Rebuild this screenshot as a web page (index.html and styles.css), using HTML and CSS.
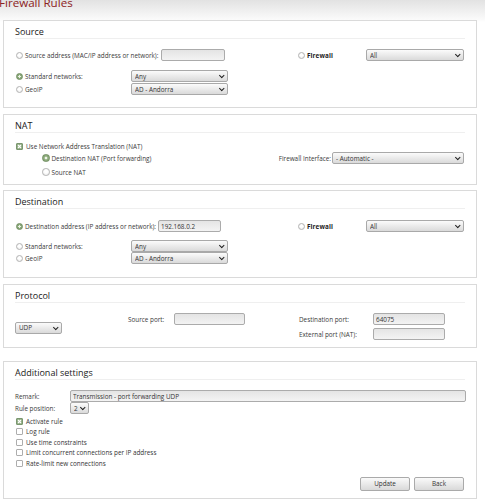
FILE: index.html
```html
<!DOCTYPE html>
<html lang="en">
<head>
<meta charset="utf-8">
<title>Firewall Rules</title>
<link rel="stylesheet" href="styles.css">
</head>
<body>
<div class="page">
  <h1 class="title">Firewall Rules</h1>

  <section class="box src">
    <h2 class="hd">Source</h2>
    <div class="row r1">
      <div class="left">
        <label class="opt"><span class="radio"></span>Source address (MAC/IP address or network):</label>
        <input class="text w-addr" type="text" value="">
      </div>
      <div class="right">
        <label class="opt fw"><span class="radio"></span><b>Firewall</b></label>
        <span class="sel w-all"><select><option>All</option></select></span>
      </div>
    </div>
    <div class="row r2">
      <label class="opt lab"><span class="radio on"></span>Standard networks:</label>
      <span class="sel w-net"><select><option>Any</option></select></span>
    </div>
    <div class="row r3">
      <label class="opt lab"><span class="radio"></span>GeoIP</label>
      <span class="sel w-net"><select><option>AD - Andorra</option></select></span>
    </div>
  </section>

  <section class="box nat">
    <h2 class="hd">NAT</h2>
    <div class="row n1">
      <label class="opt"><span class="check on"><svg viewBox="0 0 7 7" width="7" height="7"><path d="M2 2L5 5M5 2L2 5" stroke="#fff" stroke-width="1.1" fill="none"/></svg></span>Use Network Address Translation (NAT)</label>
    </div>
    <div class="row n2">
      <label class="opt indent"><span class="radio on big"></span>Destination NAT (Port forwarding)</label>
      <div class="iface">
        <span class="iface-lab">Firewall Interface:</span>
        <span class="sel w-if"><select><option>- Automatic -</option></select></span>
      </div>
    </div>
    <div class="row n3">
      <label class="opt indent"><span class="radio big"></span>Source NAT</label>
    </div>
  </section>

  <section class="box dst">
    <h2 class="hd">Destination</h2>
    <div class="row r1">
      <div class="left">
        <label class="opt"><span class="radio on"></span>Destination address (IP address or network):</label>
        <input class="text w-daddr" type="text" value="192.168.0.2">
      </div>
      <div class="right">
        <label class="opt fw"><span class="radio"></span><b>Firewall</b></label>
        <span class="sel w-all"><select><option>All</option></select></span>
      </div>
    </div>
    <div class="row r2">
      <label class="opt lab"><span class="radio"></span>Standard networks:</label>
      <span class="sel w-net"><select><option>Any</option></select></span>
    </div>
    <div class="row r3">
      <label class="opt lab"><span class="radio"></span>GeoIP</label>
      <span class="sel w-net"><select><option>AD - Andorra</option></select></span>
    </div>
  </section>

  <section class="box proto">
    <h2 class="hd">Protocol</h2>
    <div class="pgrid">
      <span class="sel w-udp pcell-udp"><select><option>UDP</option></select></span>
      <span class="plab">Source port:</span>
      <input class="text" type="text" value="">
      <span></span>
      <span class="plab">Destination port:</span>
      <input class="text" type="text" value="64075">
      <span class="plab c5">External port (NAT):</span>
      <input class="text c6" type="text" value="">
    </div>
  </section>

  <section class="box add">
    <h2 class="hd">Additional settings</h2>
    <div class="row a1">
      <span class="alab">Remark:</span>
      <input class="text w-remark" type="text" value="Transmission - port forwarding UDP">
    </div>
    <div class="row a2">
      <span class="alab">Rule position:</span>
      <span class="sel w-pos"><select><option>2</option></select></span>
    </div>
    <ul class="checks">
      <li><span class="check on"><svg viewBox="0 0 7 7" width="7" height="7"><path d="M2 2L5 5M5 2L2 5" stroke="#fff" stroke-width="1.1" fill="none"/></svg></span>Activate rule</li>
      <li><span class="check"></span>Log rule</li>
      <li><span class="check"></span>Use time constraints</li>
      <li><span class="check"></span>Limit concurrent connections per IP address</li>
      <li><span class="check"></span>Rate-limit new connections</li>
    </ul>
    <div class="buttons">
      <button class="btn" type="button">Update</button>
      <button class="btn" type="button">Back</button>
    </div>
  </section>
</div>
</body>
</html>
```

FILE: styles.css
```css
* { box-sizing: border-box; }
html, body { margin: 0; padding: 0; }
body {
  width: 485px;
  height: 500px;
  overflow: hidden;
  background: #fff linear-gradient(#e2e2e2, #fbfbfb 20px, #fff 22px) no-repeat;
  font-family: "Open Sans", "Noto Sans", sans-serif;
  font-size: 6.35px;
  color: #3a3a3a;
}
.page { padding: 0 8px 0 3px; }

.title {
  margin: -5px 0 9px -4px;
  height: 16px;
  line-height: 16px;
  font-size: 11.6px;
  font-weight: normal;
  color: #8c2222;
  white-space: nowrap;
}

.box {
  border: 1px solid #dadada;
  padding: 4px 11px 0;
  background: #fff;
}
.hd {
  margin: 0;
  padding-top: 1px;
  height: 14px;
  line-height: 12px;
  font-size: 9px;
  font-weight: normal;
  color: #222;
  border-bottom: 1px solid #efefef;
}

.row { display: flex; align-items: center; height: 12px; }
.opt { display: flex; align-items: center; white-space: nowrap; }
.left { width: 282px; display: flex; align-items: center; }
.right { display: flex; align-items: center; }
.fw { width: 69px; }
.fw b { font-weight: bold; color: #222; letter-spacing: 0.1px; }
.lab { width: 116px; }

.radio {
  flex: none;
  width: 7px; height: 7px;
  margin: 0 2px 0 1px;
  border-radius: 50%;
  border: 1px solid #b3b3b3;
  background: radial-gradient(circle at 50% 40%, #fff 30%, #e6e6e6 100%);
}
.radio.on {
  border-color: #6e8c5f;
  background: radial-gradient(circle, #eef4e8 0 28%, #8dab7c 40% 100%);
}
.radio.big { width: 7.5px; height: 7.5px; }

.check {
  flex: none;
  display: inline-block;
  width: 7px; height: 7px;
  margin: 0 3px 0 1px;
  border: 1px solid #adadad;
  border-radius: 1px;
  background: #fff;
  position: relative;
}
.check.on { border-color: #7a9670; background: #92ae84; }
.check svg { display: block; position: absolute; left: -1px; top: -1px; }

.text {
  display: block;
  height: 12px;
  margin: 0;
  padding: 0 2px;
  border: 1px solid #ababab;
  border-radius: 2px;
  background: linear-gradient(#e4e4e4, #f3f3f3);
  font: inherit;
  color: #333;
  outline: none;
}
.w-addr { width: 64px; margin-left: 3px; }
.w-daddr { width: 63px; margin-left: 2px; }

.sel { position: relative; display: block; height: 12px; flex: none; }
.sel select {
  -webkit-appearance: none;
  appearance: none;
  display: block;
  width: 100%;
  height: 100%;
  margin: 0;
  padding: 0 0 0 3px;
  border: 1px solid #a9a9a9;
  border-radius: 2px;
  background: linear-gradient(#fbfbfb, #dadada);
  font: inherit;
  color: #333;
  outline: none;
}
.sel::after {
  content: "";
  position: absolute;
  right: 5px;
  top: 50%;
  width: 2.5px;
  height: 2.5px;
  border-right: 1.3px solid #222;
  border-bottom: 1.3px solid #222;
  transform: translateY(-75%) rotate(45deg);
  pointer-events: none;
}
.w-all { width: 98px; }
.w-net { width: 97px; }
.w-if { width: 132px; }
.w-udp { width: 47px; }
.w-pos { width: 19px; }

/* Source */
.src .r1 { margin-top: 10px; }
.src .r2 { margin-top: 9px; }
.src .r3 { margin-top: 1px; }
.src { padding-bottom: 12px; }

/* NAT */
.nat { margin-top: 6px; padding-bottom: 6px; }
.nat .n1 { margin-top: 7px; }
.nat .n3 { margin-top: 2px; }
.indent .radio { margin-left: 27px; }
.nat .n2 { justify-content: space-between; }
.iface { display: flex; align-items: center; margin-right: 1px; }
.iface-lab { margin-right: 1px; }

/* Destination */
.dst { margin-top: 5px; padding-bottom: 13px; }
.dst .r1 { margin-top: 11px; }
.dst .r2 { margin-top: 8px; }

/* Protocol */
.proto { margin-top: 6px; padding-bottom: 7px; }
.pgrid {
  display: grid;
  grid-template-columns: 113px 46px 71px 54px 74px 72px;
  grid-template-rows: 12px 12px;
  row-gap: 3px;
  align-items: center;
  margin-top: 10px;
}
.pcell-udp { grid-row: 1 / span 2; align-self: center; margin-top: 2px; }
.plab { white-space: nowrap; }
.c5 { grid-column: 5; }
.c6 { grid-column: 6; }

/* Additional */
.add { margin-top: 13px; padding-bottom: 7px; }
.add .a1 { margin-top: 10px; }
.alab { width: 55px; flex: none; white-space: nowrap; }
.w-remark { flex: 1; margin-right: -1px; }
.checks { list-style: none; margin: 2px 0 0; padding: 0; }
.checks li { display: flex; align-items: center; height: 10.5px; white-space: nowrap; color: #333; }
.buttons { display: flex; justify-content: flex-end; gap: 4px; margin-top: 8px; margin-right: 1px; }
.btn {
  width: 50px;
  height: 14px;
  margin: 0;
  padding: 0;
  border: 1px solid #aaa;
  border-radius: 2px;
  background: linear-gradient(#fafafa, #d9d9d9);
  font: inherit;
  color: #333;
}
```
